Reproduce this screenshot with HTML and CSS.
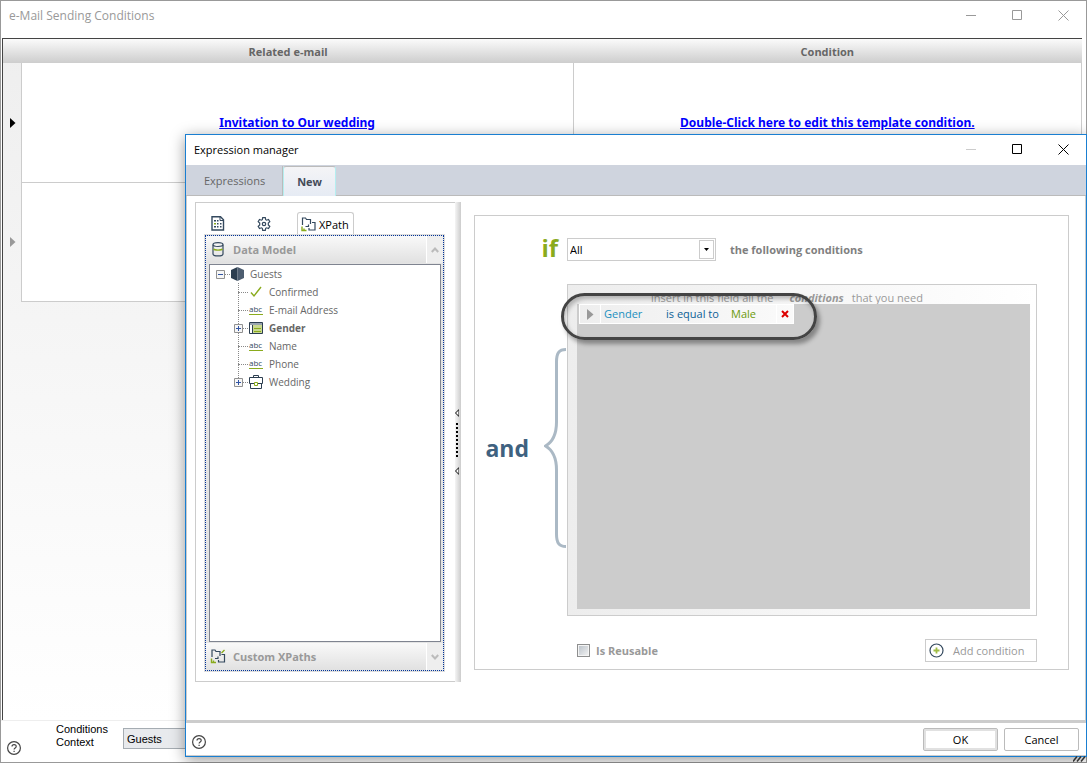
FILE: index.html
```
<!DOCTYPE html>
<html lang="en">
<head>
  <meta charset="UTF-8" />
  <meta name="viewport" content="width=device-width, initial-scale=1" />
  <title>e-Mail Sending Conditions</title>
  <link rel="stylesheet" href="styles.css">
</head>
<body>
  <main class="window">
    <header class="titlebar">
      <h1>e-Mail Sending Conditions</h1>
      <div class="window-buttons inactive">
        <button aria-label="Minimize"><svg width="11" height="11"><path d="M0 5.5h10" /></svg></button>
        <button aria-label="Maximize"><svg width="11" height="11"><path d="M.5.5h9v9h-9z" /></svg></button>
        <button aria-label="Close"><svg width="11" height="11"><path d="M.5.5l10 10M10.5.5l-10 10" /></svg></button>
      </div>
    </header>

    <div class="grid">
      <table>
        <colgroup><col class="col-marker"><col class="col-mail"><col></colgroup>
        <thead>
          <tr><th colspan="2">Related e-mail</th><th>Condition</th></tr>
        </thead>
        <tbody>
          <tr>
            <td class="marker"><svg width="6" height="10"><path d="M0 0l5.5 5L0 10z" fill="#000" /></svg></td>
            <td><a href="#">Invitation to Our wedding</a></td>
            <td><a href="#">Double-Click here to edit this template condition.</a></td>
          </tr>
          <tr>
            <td class="marker"><svg width="6" height="10"><path d="M0 0l5.5 5L0 10z" fill="#999" /></svg></td>
            <td></td>
            <td></td>
          </tr>
        </tbody>
      </table>
    </div>

    <footer class="window-footer">
      <button class="help" aria-label="Help"><svg width="14" height="14" viewBox="0 0 14 14"><circle cx="7" cy="7" r="6.4" /><path d="M5 5.6c0-2.6 4.2-2.6 4.2-.2C9.2 7 7.1 6.8 7.1 8.6M7.1 9.8v1.3" /></svg></button>
      <label for="context">Conditions Context</label>
      <select id="context" class="context"><option>Guests</option></select>
    </footer>
    <svg class="grip" width="13" height="6"><path d="M0 5.5l4-5M4 5.5l4-5M8 5.5l4-5" /></svg>
  </main>

  <section class="dialog" role="dialog" aria-labelledby="dialogTitle">
    <header class="titlebar">
      <h2 id="dialogTitle">Expression manager</h2>
      <div class="window-buttons">
        <button aria-label="Minimize" disabled><svg width="11" height="11"><path d="M0 5.5h10" /></svg></button>
        <button aria-label="Maximize"><svg width="11" height="11"><path d="M.5.5h9v9h-9z" /></svg></button>
        <button aria-label="Close"><svg width="11" height="11"><path d="M.5.5l10 10M10.5.5l-10 10" /></svg></button>
      </div>
    </header>

    <nav class="tabs">
      <button class="tab">Expressions</button>
      <button class="tab active">New</button>
    </nav>

    <div class="dialog-body">
      <aside class="explorer">
        <div class="explorer-main">
          <div class="mini-tabs">
            <button class="mini-tab" aria-label="Data">
              <svg width="14" height="15" viewBox="0 0 14 15"><path d="M1 .8h8.500l3 3v10.200H1z" fill="#fff" stroke="#34495e" stroke-width="1.4" /><path d="M9 1v3.500h3.500" fill="none" stroke="#34495e" /><path d="M3 4h2v1.500H3zM6 4h1.500v1.500H6zM6 7h1.500v1.500H6zM9 7h1.500v1.500H9zM3 10h2v1.500H3zM6 10h1.500v1.500H6zM9 10h1.500v1.500H9z" fill="#34495e" /><path d="M3 7h2v1.500H3z" fill="#8aab1d" /></svg>
            </button>
            <button class="mini-tab" aria-label="Functions">
              <svg width="14" height="14" viewBox="0 0 14 14" fill="none" stroke="#34495e" stroke-width="1.2"><path d="M5.700.7h2.600l.4 2 .9.5 1.900-.7 1.300 2.200-1.500 1.400v1.800l1.500 1.400-1.300 2.200-1.900-.7-.9.500-.4 2H5.700l-.4-2-.9-.5-1.900.7-1.300-2.200 1.500-1.400V6.100L1.200 4.700l1.300-2.200 1.900.7.9-.5z" /><circle cx="7" cy="7" r="1.7" /></svg>
            </button>
            <button class="mini-tab active">
              <svg width="15" height="15" viewBox="0 0 15 15" fill="none" stroke="#34495e" stroke-width="1.2"><path d="M1.500 8V1h3l1 1.500h4V7M4.500 9.500h3.500M11 5.500h3v7.500H8v-2M7.500 7.500v2" /><path d="M1 9.500V13.500h4.500M3 11.500V13" stroke="#8aab1d" stroke-width="1.4" /></svg>
              XPath
            </button>
          </div>

          <div class="accordion">
            <button class="accordion-head">
              <span class="accordion-title">
                <svg width="12" height="15" viewBox="0 0 12 15" fill="none" stroke="#34495e" stroke-width="1.2"><path d="M1 2.800v9.200c0 2.600 10 2.600 10 0V2.800" /><ellipse cx="6" cy="2.6" rx="5" ry="1.9" /><path d="M1.600 7c1 1.500 7.800 1.500 8.800 0" stroke="#8aab1d" stroke-width="1.4" /></svg>
                Data Model
              </span>
              <span class="chevron"><svg width="8" height="6"><path d="M.8 5L4 1.500 7.200 5" /></svg></span>
            </button>

            <div class="tree">
              <div class="node">
                <svg class="toggle" width="9" height="9"><path d="M.5.5h8v8h-8z" fill="#f6f6f6" stroke="#919191" /><path d="M2 4.500h5" stroke="#3155a4" /></svg>
                <i class="dots"></i>
                <svg class="hex" width="13" height="14" viewBox="0 0 13 14"><path d="M6.500 0L0 3v8l6.500 3z" fill="#2c3e50" /><path d="M6.500 0L13 3v8l-6.500 3z" fill="#4d5d70" /></svg>
                Guests
              </div>
              <ul>
                <li class="node leaf"><i class="dots"></i>
                  <svg class="icon" width="14" height="12"><path d="M2 6.500l3 3.500 7-9" fill="none" stroke="#8aab1d" stroke-width="1.4" /></svg>
                  Confirmed</li>
                <li class="node leaf"><i class="dots"></i><span class="icon abc">abc</span>E-mail Address</li>
                <li class="node"><svg class="toggle" width="9" height="9"><path d="M.5.5h8v8h-8z" fill="#f6f6f6" stroke="#919191" /><path d="M2 4.500h5M4.500 2v5" stroke="#3155a4" /></svg><i class="dots"></i>
                  <svg class="icon" width="14" height="12"><path d="M.5.5h13v11H.5z" fill="#c8d88f" stroke="#2c3e50" /><path d="M1 2h12" stroke="#9aa5af" stroke-width="2" /><path d="M1 3h2v8H1z" fill="#fff" /><path d="M3.500 3v8" stroke="#2c3e50" /><path d="M5 6.500h7M5 9.500h7" stroke="#8aab1d" /></svg>
                  <b>Gender</b></li>
                <li class="node leaf"><i class="dots"></i><span class="icon abc">abc</span>Name</li>
                <li class="node leaf"><i class="dots"></i><span class="icon abc">abc</span>Phone</li>
                <li class="node"><svg class="toggle" width="9" height="9"><path d="M.5.5h8v8h-8z" fill="#f6f6f6" stroke="#919191" /><path d="M2 4.500h5M4.500 2v5" stroke="#3155a4" /></svg><i class="dots"></i>
                  <svg class="icon" width="14" height="14"><path d="M1.500 8.500h11v5h-11zM.5 2.500h13v6H.5zM4.500 2.500v-2h5v2" fill="#fff" stroke="#2c3e50" /><path d="M5.500 7.500h3v3h-3z" fill="#fff" stroke="#8aab1d" /></svg>
                  Wedding</li>
              </ul>
            </div>

            <button class="accordion-head">
              <span class="accordion-title">
                <svg width="15" height="15" viewBox="0 0 15 15" fill="none" stroke="#34495e" stroke-width="1.2"><path d="M1.500 8V1h3l1 1.500h4V7M4.500 9.500h3.500M11 5.500h3v7.500H8v-2M7.500 7.500v2" /><path d="M1 9.500V13.500h4.500M3 11.500V13M11 4l3-3" stroke="#8aab1d" stroke-width="1.4" /></svg>
                Custom XPaths
              </span>
              <span class="chevron"><svg width="8" height="6"><path d="M.8 1L4 4.500 7.200 1" /></svg></span>
            </button>
          </div>
        </div>
        <div class="splitter">
          <svg width="4" height="66"><path d="M4 .5L.5 4 4 7.500zM4 58.500L.5 62 4 65.500z" fill="#fff" stroke="#000" /><path d="M2 14v34" stroke="#000" stroke-width="2" stroke-dasharray="2" /></svg>
        </div>
      </aside>

      <form class="editor">
        <span class="if">if</span>
        <div class="match">
          <div class="select-box">
            <select id="match"><option>All</option></select>
            <span class="arrow"><svg width="5" height="3"><path d="M0 0h5L2.500 3z" /></svg></span>
          </div>
          <label for="match">the following conditions</label>
        </div>

        <div class="operator">
          <span>and</span>
          <svg width="22" height="200" viewBox="0 0 22 200"><path d="M22 1.500C15 1.500 12.500 5 12.500 14v60c0 12-4 20-11 24 7 4 11 12 11 24v64c0 9 2.500 12.500 9.500 12.500" /></svg>
        </div>
        <div class="conditions">
          <p class="hint"><span>insert in this field all the</span><em>conditions</em><span>that you need</span></p>
          <div class="drop-area">
            <div class="rule">
              <span class="handle"><svg width="7" height="11"><path d="M0 0l6.500 5.500L0 11z" fill="#999" /></svg></span>
              <a href="#" class="field">Gender</a>
              <a href="#" class="compare">is equal to</a>
              <a href="#" class="value">Male</a>
              <button type="button" class="remove" aria-label="Remove"><svg width="8" height="8"><path d="M1 1l6 6M7 1L1 7" /></svg></button>
            </div>
          </div>
          <div class="callout"></div>
        </div>

        <div class="editor-footer">
          <label class="reusable"><input type="checkbox"> Is Reusable</label>
          <button type="button" class="add"><svg width="15" height="15"><circle cx="7.5" cy="7.5" r="6.5" fill="none" stroke="#34495e" stroke-width="1.2" /><path d="M7.500 4.500v6M4.500 7.500h6" stroke="#a0bd45" stroke-width="1.8" /></svg>Add condition</button>
        </div>
      </form>
    </div>

    <footer class="dialog-footer">
      <button class="help" aria-label="Help"><svg width="14" height="14" viewBox="0 0 14 14"><circle cx="7" cy="7" r="6.4" /><path d="M5 5.6c0-2.6 4.2-2.6 4.2-.2C9.2 7 7.1 6.8 7.1 8.6M7.1 9.8v1.3" /></svg></button>
      <button class="push default">OK</button>
      <button class="push">Cancel</button>
    </footer>
  </section>
</body>
</html>
```
FILE: styles.css
```
* {
  box-sizing: border-box;
}
body {
  margin: 0;
  font-family: "Open Sans", "Noto Sans", sans-serif;
  font-size: 11px;
  color: #666;
}
button,
select,
input {
  font: inherit;
  color: inherit;
  margin: 0;
}
button {
  padding: 0;
  border: none;
  background: none;
}
svg {
  display: block;
  flex: none;
}
.window {
  position: relative;
  display: flex;
  flex-direction: column;
  height: 100vh;
  border: 1px solid #999;
  background: #fff;
}
.titlebar {
  display: flex;
  flex: none;
  align-items: center;
  justify-content: space-between;
  height: 30px;
  padding: 0 17px 2px 8px;
}
.titlebar h1,
.titlebar h2 {
  margin: 0;
  font-size: 11px;
  font-weight: normal;
  color: #000;
}
.window > .titlebar h1 {
  color: #999;
  font-size: 12px;
}
.window-buttons {
  display: flex;
  gap: 35px;
}
.window-buttons path {
  fill: none;
  stroke: #000;
}
.window-buttons.inactive path {
  stroke: #999;
}
.window-buttons button:disabled path {
  stroke: #ccc;
}

/* template grid */
.grid {
  flex: 1;
  margin: 7px 4px 0 1px;
  border-top: 1px solid #444;
  border-left: 1px solid #444;
  background: linear-gradient(#eee, #fff);
}
.grid table {
  width: 100%;
  table-layout: fixed;
  border-collapse: collapse;
}
.col-marker {
  width: 18px;
}
.col-mail {
  width: 51.2%;
}
.grid th {
  height: 24px;
  padding: 0;
  background: linear-gradient(#fbfbfb, #cdcdcd);
}
.grid td {
  height: 119px;
  padding: 0;
  text-align: center;
  border: 1px solid #ccc;
  border-top: none;
  background: #fff;
  font-family: "Noto Sans", sans-serif;
  font-size: 12px;
  font-weight: bold;
}
.grid td.marker {
  padding-left: 7px;
  border: none;
  background: none;
}
.grid a {
  color: #00f;
}
.window-footer {
  display: flex;
  align-items: flex-start;
  height: 42px;
  padding: 2px 6px 0;
  border-top: 1px solid #eee;
  background: #fff;
  color: #000;
  font-family: "Liberation Sans", Arial, sans-serif;
}
.window-footer .help {
  margin-top: 18px;
}
.window-footer label {
  width: 67px;
  margin-left: 35px;
  padding-right: 8px;
  font-size: 11px;
  line-height: 13px;
}
.context {
  width: 120px;
  height: 21px;
  margin-top: 5px;
  padding: 0 3px;
  border: 1px solid #a5acb2;
  border-radius: 0;
  background: #e8eaed;
  appearance: none;
}
.help circle,
.help path {
  fill: none;
  stroke: #444;
  stroke-width: 1.2;
}
.grip {
  position: absolute;
  right: 0;
  bottom: 0;
  z-index: 2;
}
.grip path {
  stroke: #333;
  stroke-width: 1.5;
}

/* expression manager */
.dialog {
  position: absolute;
  inset: 134px 0 6px 185px;
  display: flex;
  flex-direction: column;
  border: 1px solid #1a7fd1;
  background: #fff;
  box-shadow: 0 3px 14px rgba(0, 0, 0, 0.4);
}
.tabs {
  display: flex;
  flex: none;
  align-items: flex-end;
  height: 31px;
  padding-left: 1px;
  border-bottom: 1px solid #bbb;
  background: #cfd4de;
}
.tab {
  height: 29px;
  padding: 0 17px;
  border-right: 1px solid #bbb;
}
.tab.active {
  height: 30px;
  padding: 0 13px;
  margin-bottom: -1px;
  border: 1px solid #b5eef0;
  border-top-color: #bbb;
  border-bottom: none;
  border-radius: 3px 3px 0 0;
  background: linear-gradient(#f4f4f6, #e6ebf4);
  color: #444b59;
  font-weight: bold;
}
.dialog-body {
  display: flex;
  flex: 1;
  min-height: 0;
  gap: 13px;
  padding: 6px 16px 38px 8px;
  border: 1px solid #ccc;
  border-top: none;
}
.explorer {
  display: flex;
  width: 266px;
}
.explorer-main {
  display: flex;
  flex: 1;
  flex-direction: column;
  padding: 9px 11px 10px 9px;
  border: 1px solid #ccc;
  border-right: none;
}
.splitter {
  display: flex;
  align-items: center;
  width: 6px;
  background: linear-gradient(90deg, #f5f5f5, #ccc);
}
.mini-tabs {
  display: flex;
  height: 23px;
}
.mini-tab {
  display: flex;
  align-items: center;
  width: 46px;
  padding-left: 6px;
}
.mini-tab.active {
  width: 57px;
  gap: 3px;
  padding: 0 3px;
  margin-bottom: -1px;
  border: 1px solid #ccc;
  border-bottom: none;
  border-radius: 3px 3px 0 0;
  background: #fff;
  color: #000;
}
.accordion {
  display: flex;
  flex: 1;
  flex-direction: column;
  border: 1px dotted #003399;
  outline: 1px solid #ddd;
  background: #e4e4e4;
}
.accordion-head {
  display: flex;
  flex: none;
  height: 27px;
  color: #999;
  font-weight: bold;
}
.accordion-title {
  display: flex;
  flex: 1;
  align-items: center;
  height: 100%;
  padding-left: 4px;
  background: linear-gradient(#f9f9f9, #e1e1e1);
}
.accordion-title svg {
  width: 16px;
  margin-right: 7px;
}
.chevron {
  display: flex;
  align-items: center;
  justify-content: center;
  width: 17px;
  height: 100%;
  border-left: 1px solid #fff;
  background: #eee;
}
.chevron path {
  fill: none;
  stroke: #bbb;
  stroke-width: 2;
}
.tree {
  flex: 1;
  margin: 1px 2px 1px 3px;
  border: 1px solid #7f8490;
  background: #fff;
  font-size: 10px;
}
.node {
  display: flex;
  align-items: center;
  height: 18px;
}
.tree > .node {
  padding-left: 6px;
}
.tree ul {
  position: relative;
  margin: 0 0 0 28px;
  padding: 0;
  list-style: none;
}
.tree ul::before {
  content: "";
  position: absolute;
  top: 0;
  bottom: 9px;
  left: 0;
  border-left: 1px dotted #888;
}
.tree li .toggle {
  z-index: 1;
  margin-left: -4px;
}
.dots {
  width: 5px;
  margin-right: 1px;
  border-top: 1px dotted #888;
}
.leaf .dots {
  width: 10px;
}
.hex {
  margin-right: 6px;
}
.icon {
  width: 14px;
  margin-right: 6px;
}
.abc {
  height: 10px;
  border-bottom: 1px solid #8aab1d;
  color: #34495e;
  font-size: 8px;
  line-height: 8px;
}

/* condition editor */
.editor {
  display: grid;
  flex: 1;
  grid-template-columns: 92px 1fr;
  grid-template-rows: 23px 1fr 23px;
  row-gap: 23px;
  margin: 13px 0 12px;
  padding: 22px 31px 7px 0;
  border: 1px solid #ccc;
}
.if {
  padding-right: 9px;
  text-align: right;
  color: #8aab1d;
  font-size: 24px;
  font-weight: bold;
  line-height: 20px;
}
.match {
  display: flex;
  align-items: center;
  gap: 14px;
  color: #808080;
  font-weight: bold;
}
.select-box {
  position: relative;
  width: 149px;
  height: 23px;
}
.select-box select {
  width: 100%;
  height: 100%;
  padding: 0 2px;
  border: 1px solid #ccc;
  border-radius: 0;
  background: #fff;
  color: #000;
  font-weight: normal;
  appearance: none;
}
.arrow {
  position: absolute;
  top: 2px;
  right: 2px;
  display: flex;
  align-items: center;
  justify-content: center;
  width: 15px;
  height: 19px;
  border: 1px solid #ccc;
  background: #fff;
  pointer-events: none;
}
.operator {
  display: flex;
  align-items: center;
  justify-content: flex-end;
  gap: 15px;
  padding: 0 1px 4px 0;
  color: #3f6280;
  font-size: 23px;
  font-weight: bold;
}
.operator path {
  fill: none;
  stroke: #abb9c5;
  stroke-width: 3;
}
.conditions {
  position: relative;
  display: flex;
  flex-direction: column;
  padding: 0 6px 6px 9px;
  border: 1px solid #ccc;
  background: linear-gradient(90deg, #ededed, #fff);
}
.hint {
  display: flex;
  align-items: flex-end;
  gap: 8px;
  height: 19px;
  margin: 0;
  padding-left: 74px;
  color: #999;
  line-height: 13px;
}
.hint em {
  margin-left: 8px;
  font-weight: bold;
}
.drop-area {
  flex: 1;
  padding: 0 2px;
  background: #ccc;
}
.rule {
  display: flex;
  align-items: center;
  width: 215px;
  height: 20px;
  border: 1px solid #fff;
  background: linear-gradient(90deg, #eee, #fafafa);
}
.rule a {
  padding: 0 0 2px 3px;
  text-decoration: none;
}
.handle {
  display: flex;
  align-items: center;
  justify-content: center;
  width: 21px;
  height: 18px;
  border-right: 1px solid #fff;
}
.field {
  width: 62px;
  color: #1a8fc0;
}
.compare {
  width: 65px;
  color: #0d6196;
}
.value {
  flex: 1;
  color: #6b9a0a;
}
.remove {
  display: flex;
  align-items: center;
  justify-content: center;
  width: 17px;
  height: 18px;
  border-left: 1px solid #fff;
}
.remove path {
  stroke: #d00;
  stroke-width: 2;
}
.callout {
  position: absolute;
  top: 8px;
  left: -7px;
  width: 256px;
  height: 47px;
  border: 3px solid #444;
  border-radius: 24px;
  box-shadow: 3px 4px 4px rgba(0, 0, 0, 0.35), inset 2px 3px 4px rgba(0, 0, 0, 0.25);
  pointer-events: none;
}
.editor-footer {
  display: flex;
  grid-column: 2;
  align-items: center;
  justify-content: space-between;
  padding-left: 10px;
  color: #999;
}
.reusable {
  display: flex;
  align-items: center;
  gap: 6px;
  font-weight: bold;
}
.reusable input {
  width: 13px;
  height: 13px;
  border: 1px solid #8e8f8f;
  background: linear-gradient(135deg, #b8c0c8, #f4f4f4);
  box-shadow: inset 0 0 0 1px #f4f4f4;
  appearance: none;
}
.add {
  display: flex;
  align-items: center;
  gap: 9px;
  width: 112px;
  height: 23px;
  padding-left: 3px;
  border: 1px solid #ccc;
}
.dialog-footer {
  display: flex;
  flex: none;
  align-items: center;
  gap: 6px;
  height: 35px;
  padding: 0 7px 0 6px;
  border-top: 2px solid #ccc;
  border-bottom: 1px solid #ccc;
}
.dialog-footer .help {
  margin: 6px auto 0 0;
}
.push {
  width: 75px;
  height: 23px;
  border: 1px solid #bbb;
  border-radius: 2px;
  background: #fff;
  color: #000;
}
.push.default {
  box-shadow: inset 0 0 0 2px #e1e1e1;
}
```
